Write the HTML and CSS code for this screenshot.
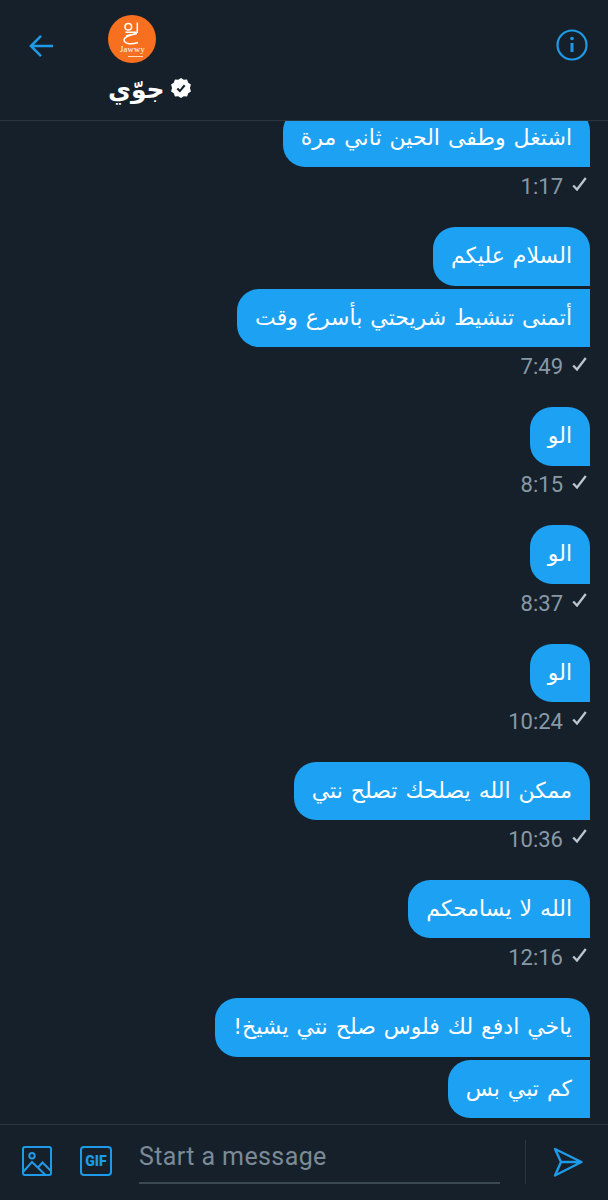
FILE: index.html
```html
<!DOCTYPE html>
<html lang="ar">
<head>
    <meta charset="UTF-8">
    <meta name="viewport" content="width=device-width, initial-scale=1.0">
    <title>Jawwy</title>
    <link rel="stylesheet" href="styles.css">
</head>
<body>
    <div class="app">
        <header class="top-bar">
            <svg class="back-icon" viewBox="0 0 26 24"><path d="M25 12H2M12.5 1.5 2 12l10.5 10.5"/></svg>
            <div class="profile">
                <div class="avatar">
                    <svg viewBox="0 0 48 48">
                        <circle class="logo-line" cx="20.300" cy="11.700" r="3.300"/>
                        <path class="logo-line" d="M29.300 7.500v9.800H17.500M18 21c4-1 8-2 11-2.500-5 1-12 3-13 6 0 4 6 5.500 14 3"/>
                        <text class="logo-word" x="24.500" y="36.500" text-anchor="middle">Jawwy</text>
                        <path class="logo-small" d="M20 41.500h15"/>
                    </svg>
                </div>
                <div class="name-row">
                    <span class="name" dir="rtl">جوّي</span>
                    <svg class="badge" viewBox="0 0 24 24">
                        <path class="badge-bg" d="M12 1l3 2 3.600-.200 1.300 3.400 2.900 2.100-1 3.700 1 3.700-2.900 2.100-1.300 3.400-3.600-.200-3 2-3-2-3.600.200-1.300-3.400L1.200 15.700l1-3.700-1-3.700 2.900-2.100 1.300-3.400 3.600.200z"/>
                        <path class="badge-tick" d="M8 12.500l2.800 2.800 5.200-6.300"/>
                    </svg>
                </div>
            </div>
            <svg class="info-icon" viewBox="0 0 32 32">
                <circle cx="16" cy="16" r="14.500"/>
                <path d="M16 14v9"/>
                <circle class="info-dot" cx="16" cy="9.500" r="1.800"/>
            </svg>
        </header>

        <main class="messages">
            <div class="group">
                <p class="bubble" dir="rtl">اشتغل وطفى الحين ثاني مرة</p>
                <div class="meta">1:17 <svg viewBox="0 0 15 14"><path d="M1.200 8.500l3.800 4L13.800 1"/></svg></div>
            </div>
            <div class="group">
                <p class="bubble" dir="rtl">السلام عليكم</p>
                <p class="bubble" dir="rtl">أتمنى تنشيط شريحتي بأسرع وقت</p>
                <div class="meta">7:49 <svg viewBox="0 0 15 14"><path d="M1.200 8.500l3.800 4L13.800 1"/></svg></div>
            </div>
            <div class="group">
                <p class="bubble" dir="rtl">الو</p>
                <div class="meta">8:15 <svg viewBox="0 0 15 14"><path d="M1.200 8.500l3.800 4L13.800 1"/></svg></div>
            </div>
            <div class="group">
                <p class="bubble" dir="rtl">الو</p>
                <div class="meta">8:37 <svg viewBox="0 0 15 14"><path d="M1.200 8.500l3.800 4L13.800 1"/></svg></div>
            </div>
            <div class="group">
                <p class="bubble" dir="rtl">الو</p>
                <div class="meta">10:24 <svg viewBox="0 0 15 14"><path d="M1.200 8.500l3.800 4L13.800 1"/></svg></div>
            </div>
            <div class="group">
                <p class="bubble" dir="rtl">ممكن الله يصلحك تصلح نتي</p>
                <div class="meta">10:36 <svg viewBox="0 0 15 14"><path d="M1.200 8.500l3.800 4L13.800 1"/></svg></div>
            </div>
            <div class="group">
                <p class="bubble" dir="rtl">الله لا يسامحكم</p>
                <div class="meta">12:16 <svg viewBox="0 0 15 14"><path d="M1.200 8.500l3.800 4L13.800 1"/></svg></div>
            </div>
            <div class="group">
                <p class="bubble" dir="rtl">ياخي ادفع لك فلوس صلح نتي يشيخ!</p>
                <p class="bubble" dir="rtl">كم تبي بس</p>
            </div>
        </main>

        <footer class="composer">
            <svg class="photo-icon" viewBox="0 0 30 30">
                <rect x="1" y="1" width="28" height="28" rx="2"/>
                <circle cx="10" cy="9.700" r="2.700"/>
                <path d="M1.500 25.500 10 16l13.500 13M16 21.500l4.500-5 8.500 8.500"/>
            </svg>
            <div class="gif-icon">GIF</div>
            <div class="input">Start a message</div>
            <div class="send-wrap">
                <svg class="send-icon" viewBox="0 0 30 30"><path d="M2 2 28.500 15 2 28.500 8 15zM8 15h20.500"/></svg>
            </div>
        </footer>
    </div>
</body>
</html>
```
FILE: styles.css
```css
* {
  box-sizing: border-box;
}

body {
  margin: 0;
  background: #16202b;
  font-family: Roboto, "Liberation Sans", sans-serif;
}

.app {
  width: 608px;
  height: 1200px;
  display: flex;
  flex-direction: column;
  overflow: hidden;
}

svg {
  display: block;
  fill: none;
}

/* top bar */
.top-bar {
  height: 121px;
  flex: none;
  display: flex;
  align-items: flex-start;
  padding: 0 20px 0 29px;
  border-bottom: 1px solid #2a3640;
}

.back-icon {
  width: 25px;
  height: 24px;
  margin-top: 34px;
  stroke: #1f9ae6;
  stroke-width: 2.600;
}

.profile {
  margin-left: 54px;
  padding-top: 15px;
  flex: 1;
}

.avatar {
  width: 48px;
  height: 48px;
  border-radius: 50%;
  background: #f7701f;
}

.logo-line {
  stroke: #fff;
  stroke-width: 1.500;
}

.logo-word {
  fill: #fff;
  font-size: 8.500px;
  font-family: "Liberation Serif", serif;
  letter-spacing: 0.300px;
}

.logo-small {
  stroke: #ffd9c0;
  stroke-width: 1;
}

.name-row {
  display: flex;
  align-items: center;
  gap: 5px;
  margin-top: 9px;
}

.name {
  color: #fff;
  font-family: "DejaVu Sans", sans-serif;
  font-size: 25px;
  font-weight: 700;
  line-height: 36px;
}

.badge {
  width: 22px;
  height: 22px;
  margin-top: -4px;
}

.badge-bg {
  fill: #fff;
}

.badge-tick {
  stroke: #16202b;
  stroke-width: 2.200;
}

.info-icon {
  width: 32px;
  height: 32px;
  margin-top: 29px;
  stroke: #1f9ae6;
  stroke-width: 2.200;
}

.info-icon path {
  stroke-width: 3;
}

.info-dot {
  fill: #1f9ae6;
  stroke: none;
}

/* messages */
.messages {
  flex: 1;
  min-height: 0;
  overflow: hidden;
  padding: 0 18px 0 0;
  display: flex;
  flex-direction: column;
  justify-content: flex-end;
  gap: 32px;
}

.group {
  display: flex;
  flex-direction: column;
  align-items: flex-end;
  flex: none;
  gap: 3.500px;
}

.bubble {
  margin: 0;
  height: 58.400px;
  padding: 0 18px;
  background: #1da1f2;
  color: #fff;
  font-family: "DejaVu Sans", sans-serif;
  font-size: 22px;
  word-spacing: 1px;
  line-height: 58px;
  border-radius: 22px 22px 0 22px;
  white-space: nowrap;
}

.group .bubble + .bubble {
  border-top-right-radius: 0;
}

.group .bubble:has(+ .bubble) {
  border-bottom-right-radius: 0;
}

.meta {
  display: flex;
  align-items: center;
  gap: 9px;
  height: 17px;
  padding-top: 1px;
  margin-top: 7.300px;
  margin-right: 3px;
  color: #8899a6;
  font-size: 22px;
  line-height: 16px;
}

.meta svg {
  width: 15px;
  height: 14px;
  margin-top: -7px;
  stroke: #bcc6ce;
  stroke-width: 2.300;
}

/* composer */
.composer {
  height: 76px;
  flex: none;
  display: flex;
  align-items: flex-start;
  padding: 0 0 0 22px;
  border-top: 1px solid #2a3640;
  margin-top: 5.600px;
}

.photo-icon {
  width: 30px;
  height: 30px;
  margin-top: 21px;
  stroke: #1f9ae6;
  stroke-width: 2;
}

.gif-icon {
  width: 32px;
  height: 30px;
  margin: 21px 0 0 28px;
  border: 2px solid #1f9ae6;
  border-radius: 4px;
  color: #1f9ae6;
  font-size: 14px;
  font-weight: 900;
  line-height: 26px;
  text-align: center;
}

.input {
  width: 361px;
  height: 59px;
  margin-left: 27px;
  color: #7b8a97;
  font-size: 25px;
  line-height: 63px;
  letter-spacing: 0.400px;
  border-bottom: 2px solid #3c4852;
}

.send-wrap {
  margin-left: 25px;
  margin-top: 15px;
  height: 44px;
  padding: 7px 0 0 27px;
  border-left: 1px solid #2a3640;
}

.send-icon {
  width: 30px;
  height: 30px;
  stroke: #1f9ae6;
  stroke-width: 2.400;
  stroke-linejoin: round;
}
```
